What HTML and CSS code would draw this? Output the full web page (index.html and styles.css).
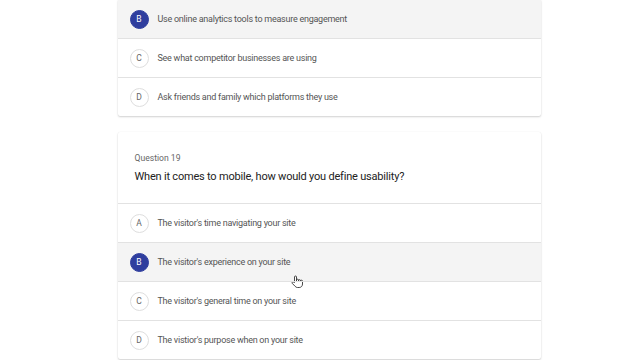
FILE: index.html
```html
<!DOCTYPE html>
<html lang="en">

<head>
    <meta charset="UTF-8" />
    <meta name="viewport" content="width=device-width, initial-scale=1.0" />
    <title>Quiz</title>
    <link rel="stylesheet" href="styles.css">
</head>

<body>
    <div class="page">
        <div class="card card-cut">
            <div class="option selected">
                <span class="letter">B</span>
                <span class="text">Use online analytics tools to measure engagement</span>
            </div>
            <div class="option">
                <span class="letter">C</span>
                <span class="text">See what competitor businesses are using</span>
            </div>
            <div class="option">
                <span class="letter">D</span>
                <span class="text">Ask friends and family which platforms they use</span>
            </div>
        </div>

        <div class="card">
            <div class="question">
                <p class="q-num">Question 19</p>
                <h3 class="q-text">When it comes to mobile, how would you define usability?</h3>
            </div>
            <div class="option">
                <span class="letter">A</span>
                <span class="text">The visitor's time navigating your site</span>
            </div>
            <div class="option selected hover">
                <span class="letter">B</span>
                <span class="text">The visitor's experience on your site</span>
                <svg class="cursor" width="12" height="13" viewBox="0 0 12 13">
                    <path d="M3.5 7.5V2a1 1 0 0 1 2 0v4.5V5.2a1 1 0 0 1 2 0v1.3-.8a1 1 0 0 1 2 0v.8-.3a1 1 0 0 1 2 0V9c0 2-1.3 3.5-3.3 3.5H6.5c-1 0-1.7-.4-2.3-1.1L1.2 8.3a.9.9 0 0 1 1.3-1.2z"
                        fill="#fff" stroke="#333" stroke-width="0.9" stroke-linejoin="round" />
                </svg>
            </div>
            <div class="option">
                <span class="letter">C</span>
                <span class="text">The visitor's general time on your site</span>
            </div>
            <div class="option">
                <span class="letter">D</span>
                <span class="text">The vistior's purpose when on your site</span>
            </div>
        </div>
    </div>
</body>

</html>
```

FILE: styles.css
```css
body {
    margin: 0;
    background: #fff;
    font-family: Roboto, "Noto Sans", sans-serif;
    overflow: hidden;
}

.page {
    width: 423px;
    margin: 0 auto;
    padding-left: 18px;
}

.card {
    background: #fff;
    border-radius: 2px;
    box-shadow: 0 1px 2px rgba(0, 0, 0, 0.18), 0 0 1px rgba(0, 0, 0, 0.08);
    margin-bottom: 16px;
}

.card-cut {
    border-top: 1px solid #e4e4e4;
    margin-top: -1px;
}

.option {
    position: relative;
    display: flex;
    align-items: center;
    height: 38px;
    padding-left: 12px;
    border-top: 1px solid #e2e2e2;
}

.card-cut .option:first-child {
    border-top: none;
}

.option.selected {
    background: #f4f4f4;
}

.letter {
    flex: none;
    box-sizing: border-box;
    width: 19px;
    height: 19px;
    border: 1.5px solid #dedede;
    border-radius: 50%;
    display: flex;
    align-items: center;
    justify-content: center;
    font-size: 8.5px;
    color: #666;
    margin-right: 9px;
    background: #fff;
}

.selected .letter {
    background: #2f3e9e;
    border-color: #2f3e9e;
    color: #fff;
}

.text {
    font-size: 9px;
    letter-spacing: -0.25px;
    color: #555;
}

.question {
    padding: 21px 17px 20px;
}

.q-num {
    margin: 0 0 7px;
    font-size: 8.6px;
    color: #666;
}

.q-text {
    margin: 0;
    font-size: 11px;
    letter-spacing: -0.2px;
    font-weight: 400;
    color: #222;
}

.cursor {
    position: absolute;
    left: 173px;
    top: 32px;
}
```
